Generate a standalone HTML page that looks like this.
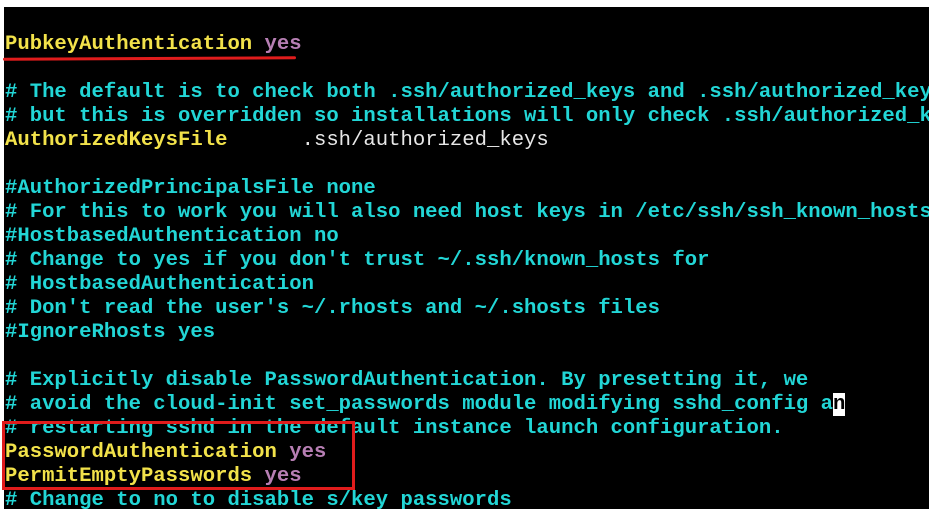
<!DOCTYPE html>
<html><head><meta charset="utf-8"><style>
html,body{margin:0;padding:0;background:#fff;width:929px;height:511px;overflow:hidden}
#t{position:absolute;left:4px;top:7px;width:925px;height:502px;background:#000}
pre{position:absolute;left:5px;top:33px;margin:0;font-family:"Liberation Mono",monospace;font-weight:bold;font-size:20.6px;line-height:24px;color:#22d6d6;white-space:pre}
.y{color:#f2e24a}.p{color:#b77fb4}.w{color:#e8e8e8;font-weight:normal}
.cur{background:#fff;color:#000}
#ul{position:absolute;left:3px;top:57px;width:293px;height:3px;background:#e01c1c;border-radius:2px;transform:rotate(-0.3deg)}
#box{position:absolute;left:2px;top:421px;width:347px;height:63px;border:3px solid #e01c1c}
</style></head><body>
<div id="t"></div>
<pre><span class="y">PubkeyAuthentication</span> <span class="p">yes</span>

# The default is to check both .ssh/authorized_keys and .ssh/authorized_keys2
# but this is overridden so installations will only check .ssh/authorized_keys
<span class="y">AuthorizedKeysFile</span>      <span class="w">.ssh/authorized_keys</span>

#AuthorizedPrincipalsFile none
# For this to work you will also need host keys in /etc/ssh/ssh_known_hosts
#HostbasedAuthentication no
# Change to yes if you don't trust ~/.ssh/known_hosts for
# HostbasedAuthentication
# Don't read the user's ~/.rhosts and ~/.shosts files
#IgnoreRhosts yes

# Explicitly disable PasswordAuthentication. By presetting it, we
# avoid the cloud-init set_passwords module modifying sshd_config a<span class="cur">n</span>
# restarting sshd in the default instance launch configuration.
<span class="y">PasswordAuthentication</span> <span class="p">yes</span>
<span class="y">PermitEmptyPasswords</span> <span class="p">yes</span>
# Change to no to disable s/key passwords</pre>
<div id="ul"></div>
<div id="box"></div>
</body></html>
